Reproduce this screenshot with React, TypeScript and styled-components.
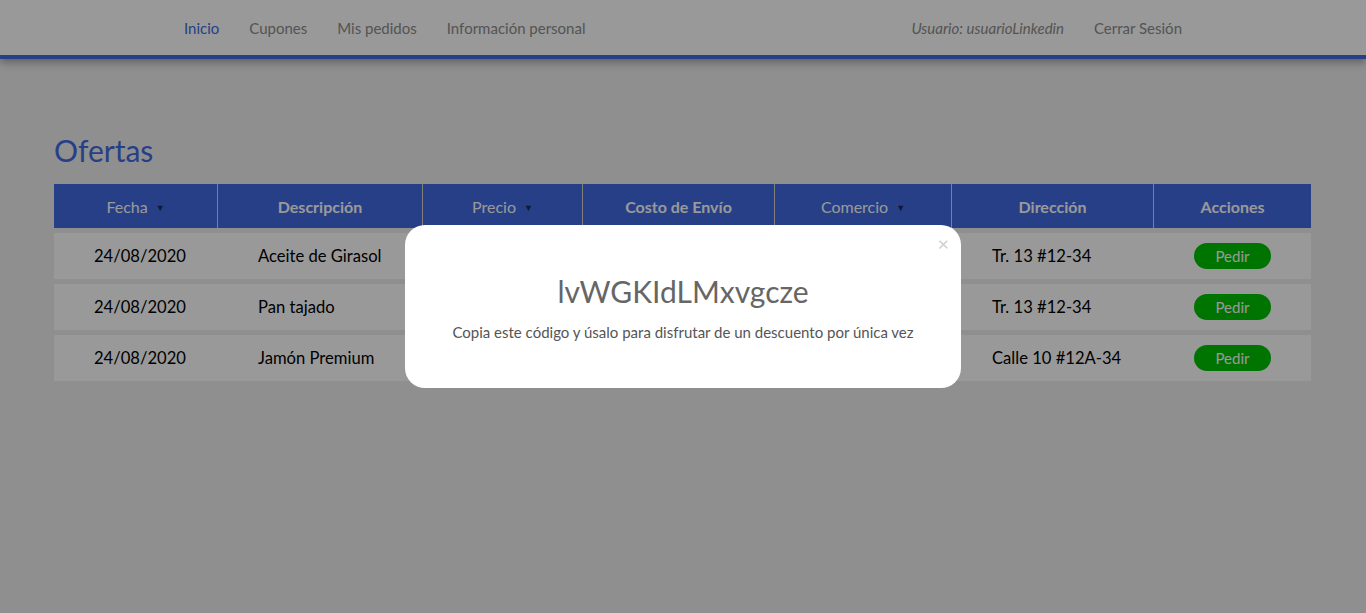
import React from "react";
import styled, { createGlobalStyle } from "styled-components";

const GlobalStyle = createGlobalStyle`
  html, body { margin: 0; padding: 0; }
  body {
    background: #eeeeee;
    font-family: "Lato", "Open Sans", sans-serif;
    min-height: 613px;
  }
`;

const Nav = styled.header`
  height: 55px;
  background: #ffffff;
  border-bottom: 4px solid #4169e1;
  box-shadow: 0 3px 8px rgba(0, 0, 0, 0.35);
`;

const NavInner = styled.div`
  width: 998px;
  height: 100%;
  margin: 0 auto;
  display: flex;
  align-items: center;
  justify-content: space-between;
`;

const NavGroup = styled.nav`
  display: flex;
  align-items: center;
  gap: 30px;
`;

const NavLink = styled.a<{ $active?: boolean; $italic?: boolean }>`
  font-size: 15px;
  color: ${(p) => (p.$active ? "#4169e1" : "#8c8c8c")};
  font-style: ${(p) => (p.$italic ? "italic" : "normal")};
  text-decoration: none;
  cursor: pointer;
`;

const Main = styled.main`
  padding: 71px 55px 0 54px;
`;

const Title = styled.h1`
  margin: 0 0 14px;
  font-size: 30px;
  font-weight: 400;
  color: #4169e1;
  line-height: 40px;
`;

const Grid = styled.div`
  display: flex;
  flex-direction: column;
  gap: 5px;
`;

const cols = "164px 205px 160px 192px 177px 202px 1fr";

const HeadRow = styled.div`
  display: grid;
  grid-template-columns: ${cols};
  height: 44px;
  background: #4169e1;
`;

const HeadCell = styled.div<{ $last?: boolean; $bold?: boolean }>`
  display: flex;
  align-items: center;
  justify-content: center;
  gap: 8px;
  color: #ffffff;
  font-size: 16px;
  font-weight: ${(p) => (p.$bold ? 700 : 400)};
  border-right: ${(p) => (p.$last ? "none" : "1px solid #d8d8d8")};
`;

const SortArrow = styled.span`
  font-size: 9px;
  color: #1c2a55;
  margin-top: 3px;
`;

const BodyRow = styled.div`
  display: grid;
  grid-template-columns: ${cols};
  height: 46px;
  background: #ffffff;
`;

const Cell = styled.div`
  display: flex;
  align-items: center;
  padding-left: 40px;
  font-size: 16.6px;
  color: #000;
  white-space: nowrap;
`;

const ActionCell = styled.div`
  display: flex;
  align-items: center;
  justify-content: center;
`;

const PedirButton = styled.button`
  width: 77px;
  height: 26px;
  border: none;
  border-radius: 13px;
  background: #00c200;
  color: #ffffff;
  font-family: inherit;
  font-size: 15px;
  padding: 0;
  cursor: pointer;
`;

const Overlay = styled.div`
  position: fixed;
  inset: 0;
  background: rgba(0, 0, 0, 0.4);
  display: flex;
  align-items: center;
  justify-content: center;
`;

const Modal = styled.div`
  position: relative;
  width: 556px;
  height: 163px;
  box-sizing: border-box;
  background: #ffffff;
  border-radius: 20px;
  display: flex;
  flex-direction: column;
  align-items: center;
  padding-top: 46px;
`;

const Close = styled.span`
  position: absolute;
  top: 6px;
  right: 12px;
  font-size: 20px;
  color: #cfcfcf;
  cursor: pointer;
`;

const Code = styled.div`
  font-size: 30px;
  color: #666666;
  line-height: 40px;
`;

const Subtitle = styled.p`
  margin: 12px 0 0;
  font-size: 15px;
  color: #555555;
`;

const rows = [
  { fecha: "24/08/2020", desc: "Aceite de Girasol", dir: "Tr. 13 #12-34" },
  { fecha: "24/08/2020", desc: "Pan tajado", dir: "Tr. 13 #12-34" },
  { fecha: "24/08/2020", desc: "Jamón Premium", dir: "Calle 10 #12A-34" },
];

const headers: { label: string; sort?: boolean; bold?: boolean }[] = [
  { label: "Fecha", sort: true },
  { label: "Descripción", bold: true },
  { label: "Precio", sort: true },
  { label: "Costo de Envío", bold: true },
  { label: "Comercio", sort: true },
  { label: "Dirección", bold: true },
  { label: "Acciones", bold: true },
];

export default function App() {
  return (
    <>
      <GlobalStyle />
      <Nav>
        <NavInner>
          <NavGroup>
            <NavLink $active>Inicio</NavLink>
            <NavLink>Cupones</NavLink>
            <NavLink>Mis pedidos</NavLink>
            <NavLink>Información personal</NavLink>
          </NavGroup>
          <NavGroup>
            <NavLink $italic>Usuario: usuarioLinkedin</NavLink>
            <NavLink>Cerrar Sesión</NavLink>
          </NavGroup>
        </NavInner>
      </Nav>
      <Main>
        <Title>Ofertas</Title>
        <Grid>
          <HeadRow>
            {headers.map((h, i) => (
              <HeadCell key={h.label} $bold={h.bold} $last={i === headers.length - 1}>
                {h.label}
                {h.sort && <SortArrow>▼</SortArrow>}
              </HeadCell>
            ))}
          </HeadRow>
          {rows.map((r, i) => (
            <BodyRow key={i}>
              <Cell>{r.fecha}</Cell>
              <Cell>{r.desc}</Cell>
              <Cell />
              <Cell />
              <Cell />
              <Cell>{r.dir}</Cell>
              <ActionCell>
                <PedirButton>Pedir</PedirButton>
              </ActionCell>
            </BodyRow>
          ))}
        </Grid>
      </Main>
      <Overlay>
        <Modal>
          <Close>×</Close>
          <Code>lvWGKIdLMxvgcze</Code>
          <Subtitle>Copia este código y úsalo para disfrutar de un descuento por única vez</Subtitle>
        </Modal>
      </Overlay>
    </>
  );
}
